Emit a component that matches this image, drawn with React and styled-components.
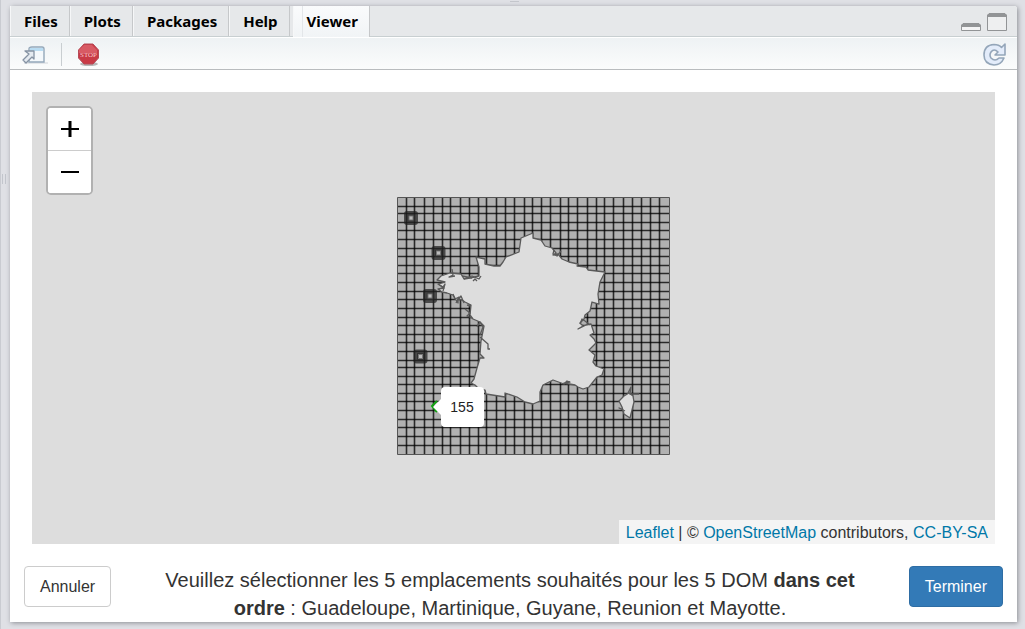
import React from "react";
import styled, { createGlobalStyle, css } from "styled-components";

const Global = createGlobalStyle`
  *, *::before, *::after { box-sizing: border-box; }
  html, body, #root { height: 100%; }
  body {
    margin: 0;
    background: #dfe0e5;
    color: #333;
    font-family: "Liberation Sans", Arial, sans-serif;
    font-size: 16px;
  }
  button { font-family: inherit; cursor: pointer; }
`;

const Workspace = styled.div`
  position: relative;
  display: flex;
  min-height: 100%;
  padding: 6px 8px 7px 0;
  &::before {
    content: "";
    position: absolute;
    top: 0;
    left: 50%;
    width: 9px;
    height: 2px;
    margin-left: -3px;
    border-bottom: 1px solid #c4c6cc;
  }
`;

const Splitter = styled.div`
  display: flex;
  align-items: center;
  width: 10px;
  margin: -6px 0 -7px;
  padding: 0 0 271px 1px;
  border-left: 1px solid #c9cbd1;
`;

const Grip = styled.span`
  width: 4px;
  height: 10px;
  border: solid #c2c5cc;
  border-width: 0 1px;
`;

const Panel = styled.main`
  display: flex;
  flex: 1;
  flex-direction: column;
  background: #fff;
  border-radius: 3px 3px 0 0;
  box-shadow: 1px 1px 5px #8b8d93;
`;

const TabBar = styled.nav`
  display: flex;
  height: 31px;
  padding-right: 10px;
  background: #e6e8ea;
  border-bottom: 1px solid #c8cfd1;
  border-radius: 3px 3px 0 0;
`;

const Tab = styled.button`
  height: ${(p) => (p.$active ? 31 : 30)}px;
  padding: 0 11px 0 13px;
  border: solid #c6c8ca;
  border-width: 0 1px 0 0;
  border-left: 1px solid #f6f7f8;
  background: #e6e8ea;
  color: #000;
  font: bold 15px/28px "Noto Sans", "Open Sans", sans-serif;
  ${(p) =>
    p.$active &&
    css`
      margin-left: 3px;
      padding-bottom: 1px;
      background:
        linear-gradient(90deg, transparent 8px, #e3e6e9 8px 9px, transparent 9px),
        linear-gradient(#fafbfc, #f1f4f6);
    `}
`;

const WindowControls = styled.div`
  display: flex;
  align-items: center;
  gap: 6px;
  margin-left: auto;
  padding-top: 2px;
`;

const IconButton = styled.button`
  display: flex;
  padding: 0;
  border: 0;
  background: none;
`;

const Toolbar = styled.div`
  display: flex;
  align-items: center;
  height: 33px;
  padding: 2px 10px 0 12px;
  border-top: 1px solid #fff;
  border-bottom: 1px solid #b9bcbe;
  background: linear-gradient(#eef2f4, #fbfcfc);
`;

const Divider = styled.span`
  width: 1px;
  height: 23px;
  margin: 0 15px 0 13px;
  background: #c9ced1;
`;

const Refresh = styled(IconButton)`
  margin-left: auto;
`;

const MapArea = styled.section`
  position: relative;
  display: flex;
  flex: 1;
  align-items: flex-end;
  justify-content: flex-end;
  min-height: 452px;
  margin: 22px 22px 0;
  background: #ddd;
  overflow: hidden;
`;

const ZoomControl = styled.div`
  position: absolute;
  top: 14px;
  left: 14px;
  display: flex;
  flex-direction: column;
  width: 47px;
  border: 2px solid #b1b1b1;
  border-radius: 5px;
  background: #fff;
  overflow: hidden;
`;

const ZoomButton = styled.button`
  display: flex;
  align-items: center;
  justify-content: center;
  height: 43px;
  padding: 0;
  border: 0;
  background: #fff;
  &:first-child {
    height: 42px;
  }
  & + & {
    border-top: 1px solid #ccc;
  }
`;

const GridLayer = styled.svg`
  position: absolute;
  top: 104px;
  left: calc(50% - 117px);
`;

const Tooltip = styled.div`
  position: absolute;
  top: 295px;
  left: calc(50% - 73px);
  width: 43px;
  border-radius: 4px;
  background: #fff;
  color: #222;
  font-size: 14px;
  line-height: 40px;
  text-align: center;
  &::before {
    content: "";
    position: absolute;
    top: 12px;
    left: -8px;
    border: solid transparent;
    border-width: 8px 8px 8px 0;
    border-right-color: #fff;
  }
`;

const Attribution = styled.div`
  padding: 2px 7px 0;
  background: #f4f4f4;
  line-height: 22px;
  a { color: #0078a8; text-decoration: none; }
`;

const Footer = styled.footer`
  display: flex;
  align-items: flex-start;
  justify-content: space-between;
  padding: 22px 14px 0;
`;

const Instructions = styled.p`
  width: 700px;
  margin: 0;
  font-size: 20px;
  line-height: 28px;
  text-align: center;
`;

const ActionButton = styled.button`
  height: 41px;
  padding: 0 15px;
  border: 1px solid ${(p) => (p.$primary ? "#2e6da4" : "#ccc")};
  border-radius: 4px;
  background: ${(p) => (p.$primary ? "#337ab7" : "#fff")};
  color: ${(p) => (p.$primary ? "#fff" : "#333")};
  font-size: 16px;
`;

const columns = [398, 407, 415, 425, 434, 443, 451, 461, 470, 479, 487, 497, 506, 515, 525, 533, 542, 551, 561, 569, 578, 588, 597, 605, 614, 624, 633, 642, 651, 660, 669];
const rows = [198, 207, 214, 223, 231, 240, 249, 257, 266, 274, 283, 292, 300, 309, 318, 326, 335, 343, 352, 361, 368, 377, 385, 394, 402, 411, 420, 428, 437, 446, 454];
const markers = [[411, 218], [438.5, 253], [430, 296], [420.5, 356.5]];

const mainland = "M533 233 L533 238 L541 240 L545 246 L552 248 L556 253 L553 255 L558 254 L562 259 L569 262 L578 264 L577 266 L586 267 L588 270 L605 272 L600 282 L598 294 L599 304 L592 302 L590 311 L585 315 L584 319 L580 323 L583 326 L578 329 L586 325 L591 324 L594 333 L590 335 L594 339 L596 343 L589 350 L595 355 L593 362 L596 366 L604 369 L602 375 L597 377 L589 387 L583 389 L578 387 L575 385 L564 383 L570 382 L567 381 L564 384 L553 380 L543 385 L540 392 L540 401 L533 404 L525 402 L517 397 L505 393 L505 397 L486 394 L485 390 L478 388 L475 385 L471 383 L474 379 L477 368 L480 358 L484 358 L480 354 L481 341 L484 326 L480 322 L473 319 L470 315 L471 305 L465 302 L462 300 L458 299 L458 303 L453 295 L447 293 L442 292 L438 289 L444 288 L438 284 L445 282 L437 280 L441 276 L450 273 L461 274 L464 279 L470 278 L479 276 L479 267 L476 257 L485 259 L485 264 L494 266 L500 266 L503 262 L506 257 L519 252 L521 238 Z";
const corsica = "M629 393 L633 396 L634 402 L632 410 L630 418 L624 414 L622 407 L619 401 L624 396 Z";
const coast = "M452 269 L453 275 L449 277 L455 276 M462 276 L472 278 M464 279 L472 276 L479 279 L481 276 M473 281 L475 279 L477 281 M438 284 L443 287 L445 284 L443 291 M453 294 L455 299 L459 297 L456 303 M458 300 L461 296 L464 303 M465 309 L470 313 L467 316 L472 318 M467 305 L471 306 M477 327 L480 322 L483 327 L480 335 M480 337 L488 344 L488 349 L490 349 M554 250 L553 254 L557 256 L561 251 M580 324 L582 319 L585 321 L590 325 M628 393 L631 387 L630 394 L639 394 M622 409 L619 408 L625 411";

function TerritoryGrid() {
  return (
    <GridLayer width="274" height="260" viewBox="397 196 274 260" aria-label="Carte de la France">
      <path d="M397.5 197.5H669.5V454.5H397.5Z" fill="#b1b1b1" stroke="#555" />
      <g stroke="#000" strokeOpacity=".76" strokeWidth="1.6">
        {columns.slice(1, -1).map((x) => <path key={x} d={`M${x - 0.5} 198V454`} />)}
        {rows.slice(1, -1).map((y) => <path key={y} d={`M398 ${y - 0.5}H669`} />)}
      </g>
      <g fill="#ddd" stroke="#5a5a5a" strokeWidth="1.3" strokeLinejoin="round">
        <path d={mainland} />
        <path d={corsica} />
        <path d={coast} fill="none" />
      </g>
      {markers.map(([x, y]) => (
        <g key={y}>
          <rect x={x - 7} y={y - 7} width="14" height="14" rx="3" fill="#222" fillOpacity=".72" />
          <rect x={x - 3} y={y - 3} width="6" height="6" fill="#777" stroke="#333" />
          <rect x={x - 1.5} y={y - 1.5} width="3" height="3" fill="#bbb" />
        </g>
      ))}
      <path d="M437 401 L432 406 L437 412" fill="none" stroke="#13a313" strokeWidth="2" />
    </GridLayer>
  );
}

function PopOutIcon() {
  return (
    <svg width="26" height="20" viewBox="0 0 26 20">
      <path d="M2 18H26" stroke="#aab2ba" opacity=".5" />
      <path d="M7 4Q7 2 10 2H20Q22 2 22 4V17H7Z" fill="#f4f8fb" stroke="#94a8ba" strokeWidth="1.4" />
      <path d="M8 3H21V6H8Z" fill="#b9dcf2" />
      <path d="M3 6H12V14L10 12L4 18L1 15L7 9Z" fill="#e4eaf0" stroke="#8592a3" strokeWidth="1.3" strokeLinejoin="round" />
    </svg>
  );
}

function StopIcon() {
  return (
    <svg width="23" height="23" viewBox="0 0 23 23">
      <ellipse cx="12" cy="21" rx="9" ry="2" fill="#888" opacity=".6" />
      <path d="M7 1H16L21.5 7V15L16 21H7L1.5 15V7Z" fill="#c93a46" stroke="#b54b57" />
      <path d="M7 2H15L20 7V10H2V7Z" fill="#e27078" opacity=".6" />
      <text x="11.5" y="14" fill="#f8c8cc" fontFamily="Liberation Serif, serif" fontSize="7" textAnchor="middle">STOP</text>
    </svg>
  );
}

function RefreshIcon() {
  return (
    <svg width="25" height="24" viewBox="0 0 25 24">
      <path d="M23 1V12H13L16 9Q12 5 9 9Q7 12 9 15Q13 19 17 15H22Q19 22 12 22Q2 21 2 12Q2 2 12 1.5Q17 1.5 19.500 4.500Z" fill="#e3ecfa" stroke="#94a6b9" strokeWidth="1.6" strokeLinejoin="round" />
    </svg>
  );
}

export default function App() {
  return (
    <>
      <Global />
      <Workspace>
        <Splitter><Grip /></Splitter>
        <Panel>
          <TabBar>
            {["Files", "Plots", "Packages", "Help"].map((name) => <Tab key={name}>{name}</Tab>)}
            <Tab $active>Viewer</Tab>
            <WindowControls>
              <IconButton aria-label="Minimize">
                <svg width="20" height="20" viewBox="0 0 20 20">
                  <path d="M.5 18.5V13L2 11.5H18L19.5 13V18.5Z" fill="#f4f4f5" stroke="#929496" />
                  <path d="M1 15V12H19V15Z" fill="#929496" />
                </svg>
              </IconButton>
              <IconButton aria-label="Maximize">
                <svg width="20" height="20" viewBox="0 0 20 20">
                  <path d="M.5 18.5V3L2 1.5H18L19.5 3V18.5Z" fill="#eeeff0" stroke="#929496" />
                  <path d="M1 5V2H19V5Z" fill="#929496" />
                </svg>
              </IconButton>
            </WindowControls>
          </TabBar>
          <Toolbar>
            <IconButton aria-label="Show in new window"><PopOutIcon /></IconButton>
            <Divider />
            <IconButton aria-label="Stop"><StopIcon /></IconButton>
            <Refresh aria-label="Refresh"><RefreshIcon /></Refresh>
          </Toolbar>
          <MapArea>
            <TerritoryGrid />
            <Tooltip>155</Tooltip>
            <ZoomControl>
              <ZoomButton aria-label="Zoom in">
                <svg width="18" height="18" viewBox="0 0 18 18"><path d="M0 9H18" stroke="#000" strokeWidth="2" /><path d="M9 1V17" stroke="#000" strokeWidth="3" /></svg>
              </ZoomButton>
              <ZoomButton aria-label="Zoom out">
                <svg width="18" height="18" viewBox="0 0 18 18"><path d="M0 9H18" stroke="#000" strokeWidth="2" /></svg>
              </ZoomButton>
            </ZoomControl>
            <Attribution>
              <a href="#leaflet">Leaflet</a> | © <a href="#osm">OpenStreetMap</a> contributors, <a href="#license">CC-BY-SA</a>
            </Attribution>
          </MapArea>
          <Footer>
            <ActionButton>Annuler</ActionButton>
            <Instructions>
              Veuillez sélectionner les 5 emplacements souhaités pour les 5 DOM <b>dans cet</b> <b>ordre</b> : Guadeloupe, Martinique, Guyane, Reunion et Mayotte.
            </Instructions>
            <ActionButton $primary>Terminer</ActionButton>
          </Footer>
        </Panel>
      </Workspace>
    </>
  );
}
